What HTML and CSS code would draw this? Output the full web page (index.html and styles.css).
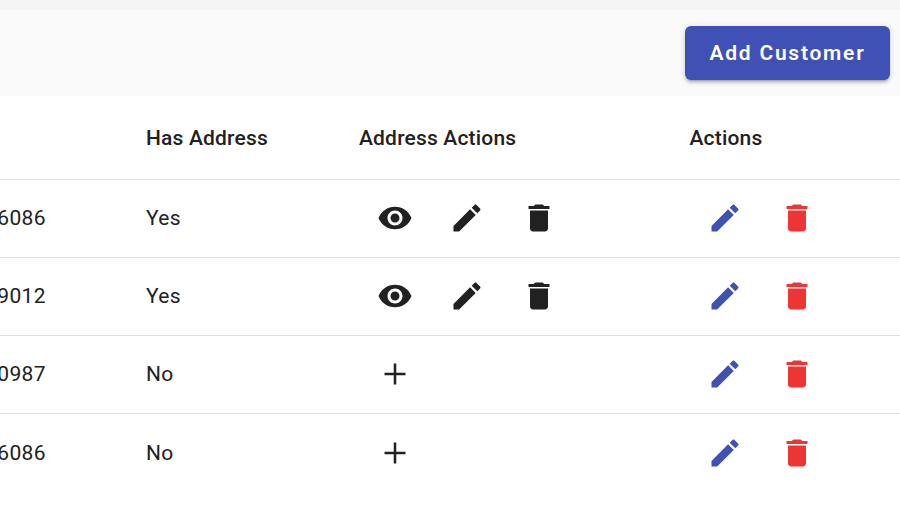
FILE: index.html
```html
<!DOCTYPE html>
<html lang="en">
<head>
<meta charset="utf-8">
<title>Customers</title>
<link rel="stylesheet" href="styles.css">
</head>
<body>
<svg class="sprite" aria-hidden="true">
<symbol id="eye" viewBox="0 0 24 24"><path d="M12 4.5C7 4.5 2.73 7.61 1 12c1.73 4.39 6 7.5 11 7.5s9.27-3.11 11-7.5c-1.73-4.39-6-7.5-11-7.5zM12 17c-2.76 0-5-2.24-5-5s2.24-5 5-5 5 2.24 5 5-2.24 5-5 5zm0-8c-1.66 0-3 1.34-3 3s1.34 3 3 3 3-1.34 3-3-1.34-3-3-3z"/></symbol>
<symbol id="edit" viewBox="0 0 24 24"><path d="M3 17.25V21h3.75L17.81 9.94l-3.75-3.75L3 17.25zM20.71 7.04c.39-.39.39-1.02 0-1.41l-2.34-2.34c-.39-.39-1.02-.39-1.41 0l-1.83 1.83 3.75 3.75 1.83-1.83z"/></symbol>
<symbol id="trash" viewBox="0 0 24 24"><path d="M6 19c0 1.1.9 2 2 2h8c1.1 0 2-.9 2-2V7H6v12zM19 4h-3.5l-1-1h-5l-1 1H5v2h14V4z"/></symbol>
<symbol id="add" viewBox="0 0 24 24"><path d="M19 12.85h-6.15V19h-1.7v-6.15H5v-1.7h6.15V5h1.7v6.15H19v1.7z"/></symbol>
</svg>
<div class="toolbar"><button class="add-button">Add Customer</button></div>
<main class="table">
<div class="row head"><span class="phone"></span><span>Has Address</span><span>Address Actions</span><span>Actions</span></div>
<div class="row"><span class="phone">6086</span><span>Yes</span><span class="icons"><svg><use href="#eye"/></svg><svg><use href="#edit"/></svg><svg><use href="#trash"/></svg></span><span class="icons"><svg class="primary"><use href="#edit"/></svg><svg class="warn"><use href="#trash"/></svg></span></div>
<div class="row"><span class="phone">9012</span><span>Yes</span><span class="icons"><svg><use href="#eye"/></svg><svg><use href="#edit"/></svg><svg><use href="#trash"/></svg></span><span class="icons"><svg class="primary"><use href="#edit"/></svg><svg class="warn"><use href="#trash"/></svg></span></div>
<div class="row"><span class="phone">0987</span><span>No</span><span class="icons"><svg><use href="#add"/></svg></span><span class="icons"><svg class="primary"><use href="#edit"/></svg><svg class="warn"><use href="#trash"/></svg></span></div>
<div class="row"><span class="phone">6086</span><span>No</span><span class="icons"><svg><use href="#add"/></svg></span><span class="icons"><svg class="primary"><use href="#edit"/></svg><svg class="warn"><use href="#trash"/></svg></span></div>
</main>
</body>
</html>
```
FILE: styles.css
```css
* { box-sizing: border-box; }
body { margin: 0; background: #fff; color: #212121; font-family: Roboto, sans-serif; overflow: hidden; }
.sprite { display: none; }
.toolbar { height: 96px; padding: 16px 10px 0 0; border-top: 10px solid #f5f5f5; background: #fafafa; display: flex; justify-content: flex-end; }
.add-button { width: 205px; height: 54px; padding: 0; border: 0; border-radius: 6px; background: #3f51b5; color: #fff; font: 600 21px Roboto, sans-serif; letter-spacing: 1.75px; box-shadow: 0 4px 2px -3px rgba(0,0,0,.2), 0 3px 3px rgba(0,0,0,.14), 0 1px 7px rgba(0,0,0,.12); }
.row { height: 78px; padding-bottom: 1px; display: grid; grid-template-columns: 146px 213px 330px 1fr; align-items: center; border-bottom: 1px solid #e0e0e0; font-size: 21px; letter-spacing: .33px; }
.row:last-child { height: 79px; padding-bottom: 2px; border-bottom: 0; }
.row.head { height: 84px; padding-bottom: 0; font-weight: 500; letter-spacing: .18px; }
.head > :last-child { padding-left: .5px; }
.phone { margin-left: -2.7px; }
.icons { display: flex; gap: 36px; padding-left: 18px; }
.icons svg { width: 36px; height: 36px; fill: #212121; flex: none; }
.icons .primary { fill: #3f51b5; }
.icons .warn { fill: #ee3535; }
```
